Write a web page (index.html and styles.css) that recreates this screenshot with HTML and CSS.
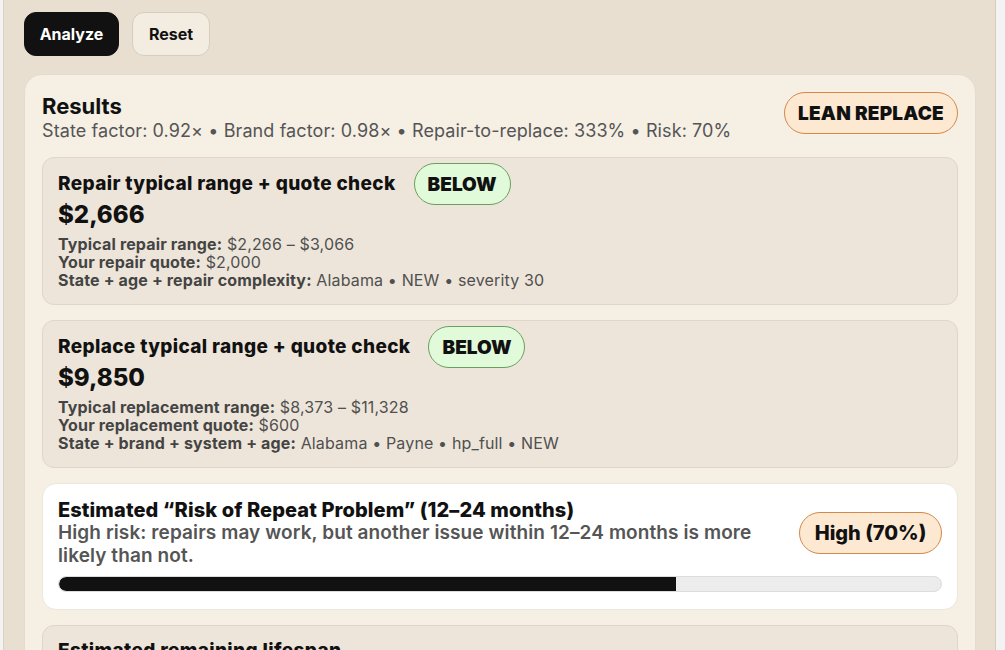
FILE: index.html
```html
<!DOCTYPE html>
<html lang="en">
<head>
<meta charset="utf-8">
<title>Results</title>
<link rel="stylesheet" href="styles.css">
</head>
<body>
<div class="panel">
  <div class="actions">
    <button class="btn btn-primary">Analyze</button>
    <button class="btn btn-secondary">Reset</button>
  </div>

  <section class="results">
    <header class="results-head">
      <div class="results-text">
        <h2 class="results-title">Results</h2>
        <p class="results-sub">State factor: 0.92× • Brand factor: 0.98× • Repair-to-replace: 333% • Risk: 70%</p>
      </div>
      <span class="pill pill-orange pill-lg">LEAN REPLACE</span>
    </header>

    <div class="card">
      <div class="card-head">
        <h3 class="card-title">Repair typical range + quote check</h3>
        <span class="pill pill-green">BELOW</span>
      </div>
      <div class="amount">$2,666</div>
      <div class="details">
        <div><b>Typical repair range:</b> $2,266 – $3,066</div>
        <div><b>Your repair quote:</b> $2,000</div>
        <div><b>State + age + repair complexity:</b> Alabama • NEW • severity 30</div>
      </div>
    </div>

    <div class="card">
      <div class="card-head">
        <h3 class="card-title">Replace typical range + quote check</h3>
        <span class="pill pill-green">BELOW</span>
      </div>
      <div class="amount">$9,850</div>
      <div class="details">
        <div><b>Typical replacement range:</b> $8,373 – $11,328</div>
        <div><b>Your replacement quote:</b> $600</div>
        <div><b>State + brand + system + age:</b> Alabama • Payne • hp_full • NEW</div>
      </div>
    </div>

    <div class="card card-white">
      <div class="risk-head">
        <div class="risk-text">
          <h3 class="card-title">Estimated “Risk of Repeat Problem” (12–24 months)</h3>
          <p class="risk-desc">High risk: repairs may work, but another issue within 12–24 months is more likely than not.</p>
        </div>
        <span class="pill pill-orange pill-risk">High (70%)</span>
      </div>
      <div class="bar"><div class="bar-fill" style="width:70%"></div></div>
    </div>

    <div class="card card-last">
      <h3 class="card-title">Estimated remaining lifespan</h3>
    </div>
  </section>
</div>
</body>
</html>
```
FILE: styles.css
```css
* { box-sizing: border-box; }

html, body {
  margin: 0;
  padding: 0;
  height: 100%;
  overflow: hidden;
}

body {
  background: #f3f3f3;
  font-family: Inter, "Noto Sans", "Liberation Sans", sans-serif;
  color: #111;
}

.panel {
  margin-left: 3px;
  width: 993px;
  min-height: 100%;
  background: #e8dfd1;
  border-left: 1px solid #dcd2c3;
  border-right: 1px solid #d6ccbd;
  padding: 12px 20px 20px 20px;
}

.actions {
  display: flex;
  gap: 13px;
  margin-bottom: 18px;
}

.btn {
  font-family: inherit;
  font-size: 16px;
  font-weight: 700;
  height: 44px;
  border-radius: 12px;
  padding: 0 10px;
  cursor: pointer;
}

.btn-primary {
  background: #111;
  color: #fff;
  border: 1px solid #111;
  width: 95px;
}

.btn-secondary {
  background: #f3ece1;
  color: #111;
  border: 1px solid #d6cdbf;
  width: 78px;
}

.results {
  width: 952px;
  background: #f5efe4;
  border: 1px solid #e4dbcd;
  border-radius: 18px;
  padding: 17px;
  display: flex;
  flex-direction: column;
  gap: 15px;
}

.results-head {
  display: flex;
  justify-content: space-between;
  align-items: flex-start;
}

.results-title {
  margin: 0;
  font-size: 22px;
  line-height: 26px;
  font-weight: 700;
  padding-top: 1px;
}

.results-sub {
  margin: 0;
  font-size: 18px;
  line-height: 23px;
  letter-spacing: 0.1px;
  color: #555;
  font-weight: 400;
}

.pill {
  display: inline-flex;
  align-items: center;
  justify-content: center;
  height: 42px;
  border-radius: 21px;
  font-weight: 900;
  font-size: 19px;
  color: #111;
  padding: 0 10px;
  white-space: nowrap;
  flex-shrink: 0;
}

.pill-orange {
  background: #fde8d2;
  border: 1.5px solid #d4894a;
}

.pill-lg {
  width: 174px;
  letter-spacing: 0.2px;
}

.pill-green {
  background: #e1fbda;
  border: 1.5px solid #6b9f60;
  width: 97px;
}

.pill-risk {
  width: 143px;
  font-size: 20px;
  font-weight: 800;
}

.card {
  background: #ede5d9;
  border: 1px solid #e0d6c7;
  border-radius: 12px;
  padding: 5px 15px 15px 15px;
}

.card-last {
  padding-top: 14px;
  height: 60px;
}

.card-white {
  background: #ffffff;
  border-color: #ece6dc;
  border-radius: 14px;
  padding: 15px 15px 17px 15px;
}

.card-head {
  display: flex;
  align-items: center;
  gap: 18px;
}

.card-title {
  margin: 0;
  font-size: 19px;
  line-height: 22px;
  font-weight: 800;
  letter-spacing: 0.35px;
  color: #111;
}

.amount {
  font-size: 24px;
  line-height: 28px;
  font-weight: 800;
  margin-top: -4px;
  margin-bottom: 6px;
}

.details {
  font-size: 16px;
  line-height: 18px;
  letter-spacing: 0.15px;
  color: #505050;
}

.details b {
  font-weight: 700;
  color: #444;
}

.risk-head {
  display: flex;
  align-items: center;
  justify-content: space-between;
}

.risk-head .card-title {
  font-size: 20px;
  letter-spacing: 0.1px;
}

.risk-text {
  width: 720px;
}

.risk-desc {
  margin: 0;
  font-size: 19px;
  line-height: 23px;
  letter-spacing: 0.1px;
  font-weight: 600;
  color: #555;
}

.bar {
  margin-top: 9px;
  height: 16px;
  background: #ececec;
  border: 1px solid #dcdcdc;
  border-radius: 8px;
  overflow: hidden;
}

.bar-fill {
  height: 100%;
  background: #111;
  border-radius: 8px 0 0 8px;
}
```
